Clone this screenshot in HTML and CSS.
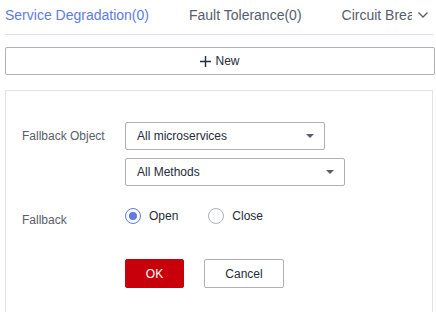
FILE: index.html
```html
<!DOCTYPE html>
<html lang="en">
<head>
    <meta charset="UTF-8">
    <meta name="viewport" content="width=device-width, initial-scale=1.0">
    <title>Service Governance</title>
    <link rel="stylesheet" href="styles.css">
</head>
<body>
    <div class="tabs">
        <div class="tab-list">
            <span class="tab active">Service Degradation(0)</span>
            <span class="tab">Fault Tolerance(0)</span>
            <span class="tab">Circuit Breaker(0)</span>
        </div>
        <div class="tab-more">
            <svg width="10" height="6" viewBox="0 0 10 6"><path d="M0.5 0.5 L5 5 L9.5 0.5" fill="none" stroke="#575d6c" stroke-width="1.3"/></svg>
        </div>
    </div>

    <button class="new-button">
        <svg width="11" height="11" viewBox="0 0 11 11"><path d="M5.5 0 V11 M0 5.5 H11" stroke="#252b3a" stroke-width="1.4"/></svg>
        <span>New</span>
    </button>

    <div class="form-panel">
        <div class="form-row">
            <label class="form-label label-object">Fallback Object</label>
            <div class="form-controls">
                <div class="select select-short">
                    <span>All microservices</span>
                    <span class="caret"></span>
                </div>
                <div class="select select-long">
                    <span>All Methods</span>
                    <span class="caret"></span>
                </div>
            </div>
        </div>

        <div class="form-row row-radio">
            <label class="form-label label-fallback">Fallback</label>
            <div class="radio-group">
                <span class="radio checked"><span class="radio-circle"></span>Open</span>
                <span class="radio"><span class="radio-circle"></span>Close</span>
            </div>
        </div>

        <div class="actions">
            <button class="btn btn-primary">OK</button>
            <button class="btn btn-default">Cancel</button>
        </div>
    </div>
</body>
</html>
```

FILE: styles.css
```css
:root {
    --text-primary: #252b3a;
    --text-secondary: #575d6c;
    --brand-blue: #5e7ce0;
    --brand-red: #c7000b;
    --border-control: #adb0b8;
    --border-light: #dfe1e6;
}

body {
    margin: 0;
    font-family: "Liberation Sans", Arial, sans-serif;
    color: var(--text-primary);
    background: #ffffff;
    overflow: hidden;
}

/* Tabs */
.tabs {
    display: flex;
    margin: 0 2px 0 5px;
    border-bottom: 1px solid var(--border-light);
    height: 34px;
}

.tab-list {
    flex: 1;
    display: flex;
    gap: 40px;
    overflow: hidden;
    white-space: nowrap;
    padding-top: 5px;
    font-size: 14px;
    line-height: 20px;
}

.tab {
    color: var(--text-secondary);
}

.tab.active {
    color: var(--brand-blue);
}

.tab-more {
    width: 22px;
    display: flex;
    justify-content: center;
    padding-top: 12px;
    box-sizing: border-box;
}

/* New button */
.new-button {
    display: flex;
    justify-content: center;
    align-items: center;
    gap: 4px;
    width: 430px;
    height: 28px;
    margin: 12px 0 0 5px;
    padding: 0;
    background: #ffffff;
    border: 1px solid var(--border-control);
    border-radius: 2px;
    font-family: inherit;
    font-size: 12px;
    color: var(--text-primary);
}

/* Form panel */
.form-panel {
    margin: 15px 3px 0 5px;
    border: 1px solid #e3e3e3;
    padding: 31px 0 40px 16px;
    min-height: 200px;
}

.form-row {
    display: flex;
}

.form-label {
    width: 103px;
    flex-shrink: 0;
    font-size: 12px;
    color: var(--text-secondary);
}

.label-object {
    line-height: 28px;
}

.form-controls {
    display: flex;
    flex-direction: column;
    gap: 8px;
}

.select {
    display: flex;
    align-items: center;
    justify-content: space-between;
    height: 28px;
    box-sizing: border-box;
    border: 1px solid var(--border-control);
    border-radius: 2px;
    padding: 0 10px 0 11px;
    font-size: 12px;
    color: var(--text-primary);
}

.select-short {
    width: 200px;
}

.select-long {
    width: 220px;
}

.caret {
    width: 0;
    height: 0;
    border-left: 4px solid transparent;
    border-right: 4px solid transparent;
    border-top: 4px solid var(--text-secondary);
}

/* Radios */
.row-radio {
    margin-top: 18px;
}

.label-fallback {
    line-height: 24px;
    padding-top: 4px;
}

.radio-group {
    display: flex;
    align-items: center;
    height: 24px;
    gap: 30px;
    font-size: 12px;
    color: var(--text-primary);
}

.radio {
    display: flex;
    align-items: center;
    gap: 8px;
}

.radio-circle {
    width: 16px;
    height: 16px;
    box-sizing: border-box;
    border: 1px solid var(--border-control);
    border-radius: 50%;
    display: flex;
    align-items: center;
    justify-content: center;
}

.radio.checked .radio-circle {
    border-color: var(--brand-blue);
}

.radio.checked .radio-circle::after {
    content: "";
    width: 8px;
    height: 8px;
    border-radius: 50%;
    background: var(--brand-blue);
}

/* Actions */
.actions {
    display: flex;
    gap: 20px;
    margin: 27px 0 0 103px;
}

.btn {
    height: 29px;
    border-radius: 2px;
    font-family: inherit;
    font-size: 12px;
    padding: 0;
}

.btn-primary {
    width: 59px;
    background: var(--brand-red);
    border: 1px solid var(--brand-red);
    color: #ffffff;
}

.btn-default {
    width: 80px;
    background: #ffffff;
    border: 1px solid var(--border-control);
    color: var(--text-primary);
}
```
